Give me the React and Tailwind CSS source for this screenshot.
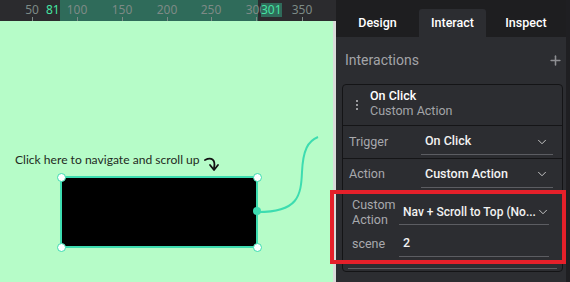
import React from "react";
import { ChevronDown, Plus } from "lucide-react";

const ticks = [
  { x: 32, label: "50" },
  { x: 77, label: "100" },
  { x: 122, label: "150" },
  { x: 167, label: "200" },
  { x: 211, label: "250" },
  { x: 256, label: "300" },
  { x: 302, label: "350" },
];

const Ruler = () => (
  <div className="relative h-[21px] bg-[#2b2b2e] overflow-hidden">
    <div className="absolute left-[60px] top-0 h-full w-[198px] bg-[#2f6b5a]" />
    {ticks.map((t) => (
      <div key={t.label} className="absolute top-0 h-full" style={{ left: t.x }}>
        <span className="absolute top-[3px] -translate-x-1/2 text-[12px] leading-[14px] text-[#7d8a86] whitespace-nowrap">
          {t.label}
        </span>
        <span className="absolute bottom-0 left-0 h-[4px] w-px bg-[#7d8a86]" />
      </div>
    ))}
    <span className="absolute left-[46px] top-[3px] text-[12px] leading-[14px] text-[#45e3a2]">81</span>
    <span className="absolute left-[261px] top-[3px] bg-[#2f6b5a] text-[12px] leading-[14px] text-[#45e3a2]">301</span>
  </div>
);

const Handle = ({ className }) => (
  <span className={"absolute h-[9px] w-[9px] rounded-full border-[1.5px] border-[#3ddcb0] bg-white " + className} />
);

const Canvas = () => (
  <div className="relative flex-1 bg-[#b6fcc8] overflow-hidden" style={{ fontFamily: "Lato, 'Open Sans', sans-serif" }}>
    <span className="absolute left-[15px] top-[131px] text-[12.1px] leading-[16px] text-[#1f2a22] whitespace-nowrap">
      Click here to navigate and scroll up
    </span>
    <svg className="absolute left-0 top-0" width="333" height="261" viewBox="0 21 333 261">
      <path d="M205 160 C 211 157, 216 159, 214 168" fill="none" stroke="#111" strokeWidth="1.8" strokeLinecap="round" />
      <path d="M210 165 L 214 170 L 218 165" fill="none" stroke="#111" strokeWidth="1.8" strokeLinecap="round" strokeLinejoin="round" />
      <path d="M258 212 C 298 212, 301 196, 302 172 C 303 150, 308 141, 318 137" fill="none" stroke="#3ddcb0" strokeWidth="2" />
    </svg>
    <div className="absolute left-[60px] top-[155px] h-[72px] w-[198px] border-2 border-[#3ddcb0] bg-black">
      <Handle className="-left-[5.5px] -top-[5.5px]" />
      <Handle className="-right-[5.5px] -top-[5.5px]" />
      <Handle className="-left-[5.5px] -bottom-[5.5px]" />
      <Handle className="-right-[5.5px] -bottom-[5.5px]" />
      <span className="absolute -right-[5px] top-[29px] h-[8px] w-[8px] rounded-full bg-[#3ddcb0]" />
    </div>
  </div>
);

const Select = ({ value, width = "w-[132px]", size = "text-[12.5px]" }) => (
  <div className={"flex h-[26px] items-center justify-between border-b border-[#5c5d62] pl-[4px] pr-[4px] " + width}>
    <span className={"whitespace-nowrap font-medium text-[#f2f2f2] " + size}>{value}</span>
    <ChevronDown className="h-[14px] w-[14px] shrink-0 text-[#d8d8d8]" strokeWidth={1.5} />
  </div>
);

const Panel = () => (
  <div className="flex w-[234px] flex-col bg-[#2c2d31]" style={{ fontFamily: "Roboto, 'Noto Sans', sans-serif" }}>
    <div className="flex h-[37px] items-end bg-[#1e1e20] pr-[4px]">
      <div className="flex h-[28px] w-[83px] items-center justify-center text-[12.5px] font-medium text-white">Design</div>
      <div className="flex h-[28px] w-[67px] items-center justify-center rounded-t-[3px] bg-[#2c2d31] text-[12.5px] font-medium text-white">Interact</div>
      <div className="flex h-[28px] flex-1 items-center justify-center text-[12.5px] font-medium text-white">Inspect</div>
    </div>
    <div className="flex flex-1 flex-col pl-[6px] pr-[7px]">
      <div className="flex h-[47px] items-center justify-between pl-[3px]">
        <span className="text-[14px] text-[#a3a4a8]">Interactions</span>
        <Plus className="h-[15px] w-[15px] text-[#8e8f93]" strokeWidth={2.5} />
      </div>
      <div className="flex h-[188px] flex-col rounded-[4px] border border-[#141416]">
        <div className="flex h-[41px] items-center border-b border-[#151517] pb-[4px] pl-[13px]">
          <div className="mr-[12px] mt-[3px] flex flex-col gap-[2px]">
            <span className="h-[2px] w-[2px] bg-[#9a9a9e]" />
            <span className="h-[2px] w-[2px] bg-[#9a9a9e]" />
            <span className="h-[2px] w-[2px] bg-[#9a9a9e]" />
          </div>
          <div className="flex flex-col leading-[15px]">
            <span className="text-[12.5px] font-medium text-white">On Click</span>
            <span className="text-[12.5px] text-[#a3a4a8]">Custom Action</span>
          </div>
        </div>
        <div className="flex h-[33px] items-center border-b border-[#151517] pl-[6px]">
          <span className="w-[72px] text-[12.5px] text-[#a8a9ad]">Trigger</span>
          <Select value="On Click" />
        </div>
        <div className="flex h-[31px] items-center pl-[6px]">
          <span className="w-[72px] text-[12.5px] text-[#a8a9ad]">Action</span>
          <Select value="Custom Action" />
        </div>
        <div className="flex flex-col gap-[4px] pl-[9px] pt-[7px]">
          <div className="flex items-center">
            <span className="w-[47px] text-[12.5px] leading-[15px] text-[#a8a9ad]">Custom Action</span>
            <Select value="Nav + Scroll to Top (No..." width="w-[150px]" size="text-[12px]" />
          </div>
          <div className="flex items-center">
            <span className="w-[47px] text-[12.5px] text-[#a8a9ad]">scene</span>
            <div className="flex h-[26px] w-[150px] items-center border-b border-[#5c5d62] pl-[4px]">
              <span className="text-[12.5px] font-medium text-[#f2f2f2]">2</span>
            </div>
          </div>
        </div>
        <div className="mx-[5px] mt-[11px] h-px bg-[#5c5d62]" />
      </div>
    </div>
  </div>
);

export default function App() {
  return (
    <div className="relative flex h-[282px] w-[570px] overflow-hidden bg-[#2c2d31]">
      <div className="flex w-[336px] flex-col">
        <Ruler />
        <div className="flex flex-1">
          <Canvas />
          <div className="w-[3px] bg-[#d9dbd9]" />
        </div>
      </div>
      <Panel />
      <div className="absolute right-0 top-0 h-full w-[4px] bg-[#1f1f22]" />
      <div className="absolute left-[330px] top-[190px] h-[74px] w-[236px] border-[4px] border-[#e5202a]" />
    </div>
  );
}
